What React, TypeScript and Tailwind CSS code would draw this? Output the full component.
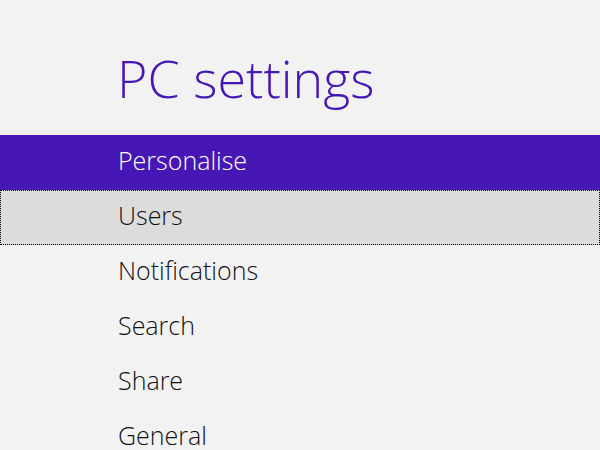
const items = ["Personalise", "Users", "Notifications", "Search", "Share", "General"];

const App = () => {
  return (
    <div className="h-[450px] w-[600px] overflow-hidden bg-[#f2f2f2] font-['Open_Sans',sans-serif] font-light">
      <h1 className="h-[135px] pt-[43px] pl-[117px] text-[52px] leading-[70px] font-light text-[#4617b4]">
        PC settings
      </h1>
      <ul>
        {items.map((item, i) => (
          <li
            key={item}
            className={
              i === 0
                ? "h-[55px] flex items-center pb-[3px] pl-[118px] bg-[#4617b4] text-white text-[25px]"
                : i === 1
                ? "h-[55px] flex items-center pb-[3px] pl-[117px] bg-[#dcdcdc] border border-dotted border-black text-[#111] text-[25px]"
                : "h-[55px] flex items-center pb-[3px] pl-[118px] text-[#111] text-[25px]"
            }
          >
            {item}
          </li>
        ))}
      </ul>
    </div>
  );
};

export default App;
